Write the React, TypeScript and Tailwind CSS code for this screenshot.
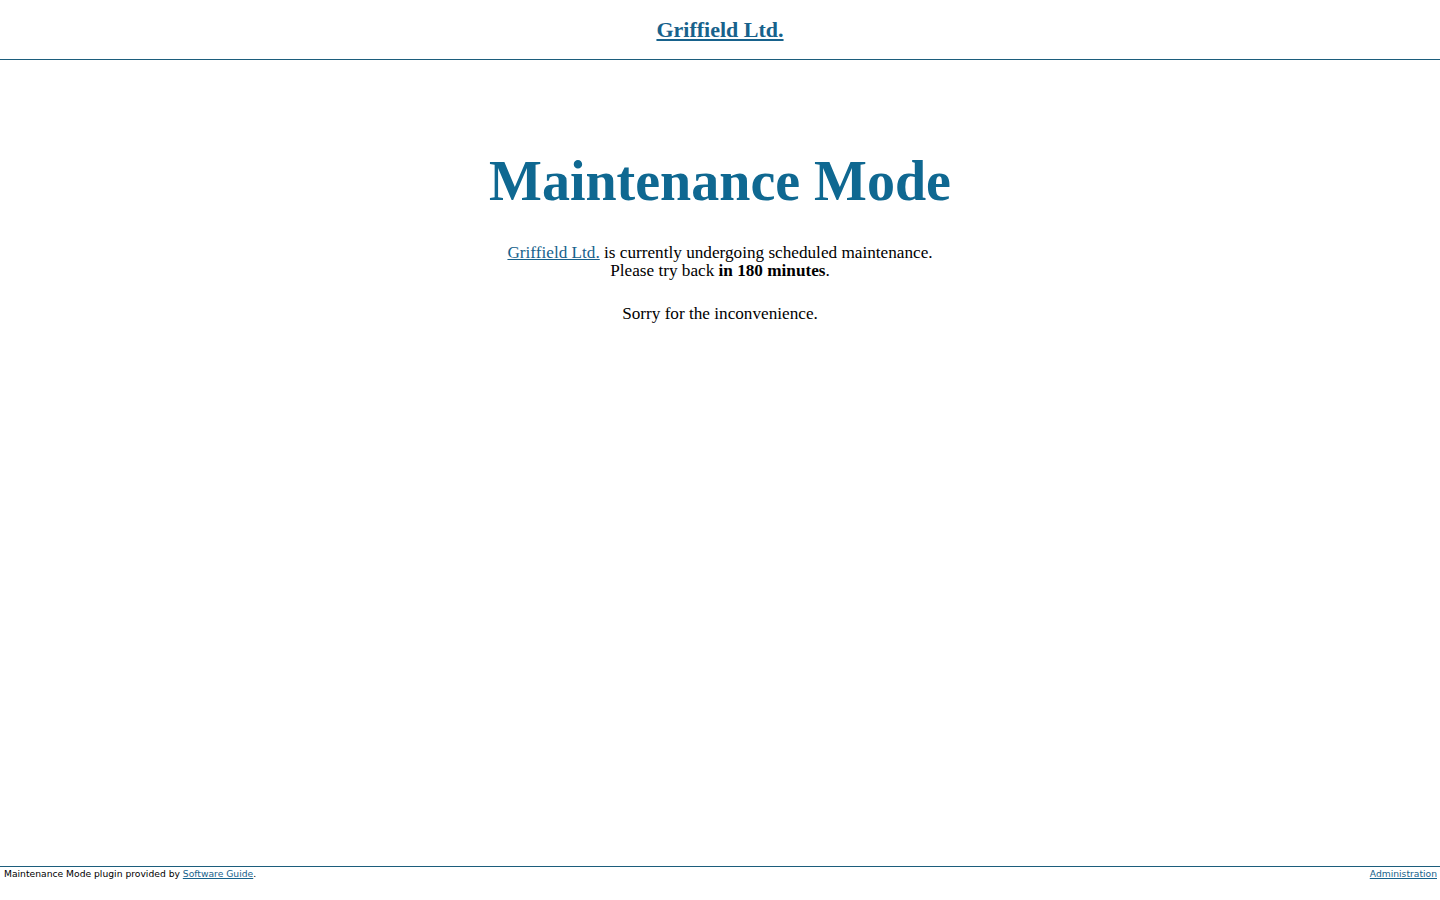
export default function App() {
  const serif = { fontFamily: '"Liberation Serif", "DejaVu Serif", serif' };
  return (
    <div className="flex min-h-[900px] flex-col bg-white text-black" style={serif}>
      <header className="flex h-[60px] items-center justify-center border-b border-[#1c5d7c]">
        <a href="#" className="text-[22px] font-bold text-[#17628c] underline underline-offset-2">
          Griffield Ltd.
        </a>
      </header>
      <main className="flex flex-1 flex-col items-center">
        <h1 className="mt-[91px] text-[56px] font-bold leading-[60px] text-[#0f6891]">Maintenance Mode</h1>
        <p className="mt-[33px] text-center text-[17.2px] leading-[18px]">
          <a href="#" className="text-[#17628c] underline">Griffield Ltd.</a> is currently undergoing scheduled maintenance.
          <br />
          Please try back <b>in 180 minutes</b>.
        </p>
        <p className="mt-[25px] text-center text-[17.2px] leading-[18px]">Sorry for the inconvenience.</p>
      </main>
      <footer
        className="mb-[20px] flex justify-between border-t border-[#1c5d7c] pl-[4px] pr-[3px] text-[9.2px] leading-[13px]"
        style={{ fontFamily: '"DejaVu Sans", Verdana, sans-serif' }}
      >
        <span>
          Maintenance Mode plugin provided by{' '}
          <a href="#" className="text-[#17628c] underline">Software Guide</a>.
        </span>
        <a href="#" className="text-[#17628c] underline">Administration</a>
      </footer>
    </div>
  );
}
